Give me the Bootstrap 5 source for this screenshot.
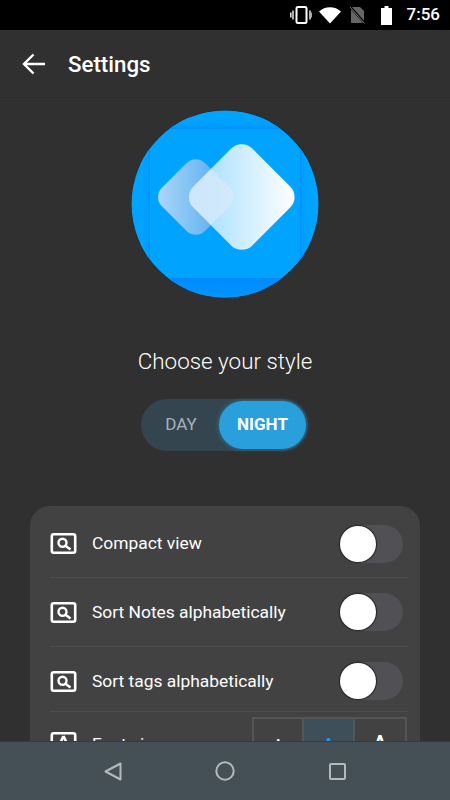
<!DOCTYPE html>
<html lang="en"><head><meta charset="utf-8"><title>Settings</title>
<link href="https://cdn.jsdelivr.net/npm/bootstrap@5.3.0/dist/css/bootstrap.min.css" rel="stylesheet">
<style>
html,body{margin:0;height:800px;overflow:hidden;background:#303030;font-family:Roboto,"Liberation Sans",sans-serif}
.screen{width:450px;height:800px;overflow:hidden}
.statusbar{height:30px;background:#000;color:#fff;font-size:17px;font-weight:500;padding-right:10px}
.statusbar svg{display:block}
.toolbar{height:68px;padding-left:22px;border-bottom:1px solid #2c2c2c}
.toolbar h1{font-size:22.300px;font-weight:500;margin:2px 0 0 22px;color:#fff}
.scroller{min-height:0;overflow:hidden}
.logo{margin:12px auto 0;width:188px;height:188px;display:block}
.headline{font-weight:300;font-size:22.400px;line-height:28px;color:#fff;margin-top:49px}
.daynight{width:167px;height:52px;margin:24px 0 0 141px;border-radius:26px;background:#34454f;padding:2px;font-size:17px}
.dayopt{width:76px;color:#a8b2b8}
.nightopt{width:87px;height:48px;border-radius:24px;background:#29a0dc;color:#fff;font-weight:700;box-shadow:0 0 5px rgba(41,160,220,.55)}
.panel{margin:55px 30px 0;background:#424242;border-radius:20px;padding:2px 12px 0 20px}
.optrow{height:69px;color:#fff;font-size:17.400px;border-bottom:1px solid #4e4e4e;padding-right:5px}
.optrow.first{height:70px;padding-top:2px}
.optrow.thin{height:65px;padding-top:4px}
.optrow svg{flex:none;margin-right:15px}
.track{width:63px;height:38px;border-radius:19px;background:#515155}
.knob{width:36px;height:36px;border-radius:50%;background:#fff;box-shadow:0 0 1px 1px #222;left:0;top:1px}
.sizerow{height:70px;color:#fff;font-size:17.400px;padding-top:5px}
.sizerow svg{flex:none;margin-right:15px;margin-top:15px}
.sizes{width:155px;height:60px;border:2px solid #555;margin-right:1px}
.sizecell{width:51px;border-right:2px solid #555;text-align:center;line-height:1;padding-top:18px;font-weight:700}
.sizecell:last-child{border-right:0}
.sizecell.on{background:#3f4f5a;color:#2a97ee;font-size:15px}
.sizecell.sm{font-size:11px;padding-top:19px}
.sizecell.lg{font-size:20px;padding-top:14px}
.sizelabel{margin-top:14px}
.navbarbottom{height:59px;background:#455056;border-top:1px solid #333c40;padding:0 104px}
.homeicon{margin-right:2px}
</style></head>
<body>
<div class="screen d-flex flex-column position-relative">
  <div class="statusbar d-flex align-items-center justify-content-end flex-shrink-0">
    <svg width="22" height="18" viewBox="0 0 22 18" style="margin-right:7px"><rect x="6.500" y="1" width="10" height="16" rx="1.500" fill="none" stroke="#fff" stroke-width="2"/><path d="M3 4.500v9M.8 6.500v5M20 4.500v9M22 6.500v5" stroke="#fff" stroke-width="1.600" fill="none" opacity=".85"/></svg>
    <svg width="22" height="17" viewBox="0 0 22 17" style="margin-right:9px"><path d="M0 4.400C3 1.800 6.800.2 11 .2s8 1.600 11 4.200L11 16.600z" fill="#fff"/></svg>
    <svg width="15" height="18" viewBox="0 0 15 18" style="margin-right:16px"><path d="M1 1h9l4 4v12H1z" fill="#666"/><path d="M0 .5 15 17.500" stroke="#000" stroke-width="2.400"/><path d="M0 1 14.500 17.500" stroke="#777" stroke-width="1"/></svg>
    <svg width="11" height="19" viewBox="0 0 11 19" style="margin-right:15px"><path d="M3.500 0h4v2H11v17H0V2h3.500z" fill="#fff"/></svg>
    <span>7:56</span>
  </div>
  <div class="toolbar d-flex align-items-center flex-shrink-0">
    <svg width="24" height="22" viewBox="0 0 24 22"><path d="M23 11H2.500M11.500 1.500 2 11l9.500 9.500" fill="none" stroke="#fff" stroke-width="2.400"/></svg>
    <h1>Settings</h1>
  </div>
  <div class="scroller flex-grow-1">
    <svg class="logo" viewBox="0 0 188 188">
      <defs>
        <clipPath id="circ"><circle cx="94" cy="94" r="93.500"/></clipPath>
        <linearGradient id="big" gradientUnits="userSpaceOnUse" x1="56" y1="87" x2="165" y2="87" gradientTransform="rotate(-45 110.750 87)"><stop offset="0" stop-color="#fff" stop-opacity=".6"/><stop offset="1" stop-color="#fff"/></linearGradient>
        <linearGradient id="small" gradientUnits="userSpaceOnUse" x1="26" y1="87" x2="104" y2="87" gradientTransform="rotate(-45 64.800 87)"><stop offset="0" stop-color="#c4def6"/><stop offset="1" stop-color="#4ea4ee"/></linearGradient>
        <linearGradient id="fadeb" x1="0" y1="0" x2="0" y2="1"><stop offset="0" stop-color="#008aff"/><stop offset="1" stop-color="#0096ff"/></linearGradient>
        <linearGradient id="fadet" x1="0" y1="1" x2="0" y2="0"><stop offset="0" stop-color="#008fff"/><stop offset=".3" stop-color="#009eff"/><stop offset="1" stop-color="#00a4ff"/></linearGradient>
        <linearGradient id="fadel" x1="1" y1="0" x2="0" y2="0"><stop offset="0" stop-color="#008cff"/><stop offset=".25" stop-color="#00a0ff"/><stop offset="1" stop-color="#00a4ff"/></linearGradient>
        <linearGradient id="fader" x1="0" y1="0" x2="1" y2="0"><stop offset="0" stop-color="#008cff"/><stop offset=".25" stop-color="#00a0ff"/><stop offset="1" stop-color="#00a4ff"/></linearGradient>
      </defs>
      <circle cx="94" cy="94" r="94" fill="#222"/>
      <g clip-path="url(#circ)">
        <rect width="188" height="188" fill="#00a4ff"/>
        <rect x="0" y="8" width="188" height="11" fill="url(#fadet)"/>
        <rect x="9" y="19" width="10" height="150" fill="url(#fadel)"/>
        <rect x="169" y="19" width="10" height="150" fill="url(#fader)"/>
        <rect x="0" y="168" width="188" height="20" fill="url(#fadeb)"/>
        <rect x="34.300" y="56.500" width="61" height="61" rx="13" fill="url(#small)" opacity=".88" transform="rotate(45 64.800 87)"/>
        <rect x="69" y="45.250" width="83.500" height="83.500" rx="15" fill="url(#big)" transform="rotate(45 110.750 87)"/>
      </g>
    </svg>
    <div class="headline text-center">Choose your style</div>
    <div class="daynight d-flex align-items-center">
      <div class="dayopt text-center">DAY</div>
      <div class="nightopt d-flex align-items-center justify-content-center">NIGHT</div>
    </div>
    <div class="panel">
      <div class="optrow first d-flex align-items-center">
        <svg width="27" height="21" viewBox="0 0 27 21"><rect x="1.800" y="1.300" width="23.400" height="18.400" rx="2" fill="none" stroke="#fff" stroke-width="2.600"/><circle cx="12.500" cy="9.800" r="4" fill="none" stroke="#fff" stroke-width="2.400"/><path d="M15.500 12.800 20.500 16.500" stroke="#fff" stroke-width="2.600"/></svg>
        <span class="flex-grow-1">Compact view</span>
        <div class="track position-relative"><div class="knob position-absolute"></div></div>
      </div>
      <div class="optrow d-flex align-items-center">
        <svg width="27" height="21" viewBox="0 0 27 21"><rect x="1.800" y="1.300" width="23.400" height="18.400" rx="2" fill="none" stroke="#fff" stroke-width="2.600"/><circle cx="12.500" cy="9.800" r="4" fill="none" stroke="#fff" stroke-width="2.400"/><path d="M15.500 12.800 20.500 16.500" stroke="#fff" stroke-width="2.600"/></svg>
        <span class="flex-grow-1">Sort Notes alphabetically</span>
        <div class="track position-relative"><div class="knob position-absolute"></div></div>
      </div>
      <div class="optrow thin d-flex align-items-center">
        <svg width="27" height="21" viewBox="0 0 27 21"><rect x="1.800" y="1.300" width="23.400" height="18.400" rx="2" fill="none" stroke="#fff" stroke-width="2.600"/><circle cx="12.500" cy="9.800" r="4" fill="none" stroke="#fff" stroke-width="2.400"/><path d="M15.500 12.800 20.500 16.500" stroke="#fff" stroke-width="2.600"/></svg>
        <span class="flex-grow-1">Sort tags alphabetically</span>
        <div class="track position-relative"><div class="knob position-absolute"></div></div>
      </div>
      <div class="sizerow d-flex align-items-start">
        <svg width="27" height="21" viewBox="0 0 27 21"><rect x="1.800" y="1.300" width="23.400" height="18.400" rx="2" fill="none" stroke="#fff" stroke-width="2.600"/><path d="M13.500 4 8 16M13.500 4 19 16" stroke="#fff" stroke-width="2.600"/></svg>
        <span class="flex-grow-1 sizelabel">Font size</span>
        <div class="sizes d-flex">
          <div class="sizecell sm">A</div>
          <div class="sizecell on">A</div>
          <div class="sizecell lg">A</div>
        </div>
      </div>
    </div>
  </div>
  <div class="navbarbottom d-flex align-items-center justify-content-between flex-shrink-0">
    <svg width="18" height="19" viewBox="0 0 18 19"><path d="M16.500 1.500v16L1.500 9.500z" fill="none" stroke="#b4b9bc" stroke-width="2" stroke-linejoin="round"/></svg>
    <svg class="homeicon" width="20" height="20" viewBox="0 0 20 20"><circle cx="10" cy="10" r="8.700" fill="none" stroke="#b4b9bc" stroke-width="2"/></svg>
    <svg width="17" height="17" viewBox="0 0 17 17"><rect x="1" y="1" width="15" height="15" rx="1" fill="none" stroke="#b4b9bc" stroke-width="2"/></svg>
  </div>
</div>
<script src="https://cdn.jsdelivr.net/npm/bootstrap@5.3.0/dist/js/bootstrap.bundle.min.js"></script>
</body></html>
